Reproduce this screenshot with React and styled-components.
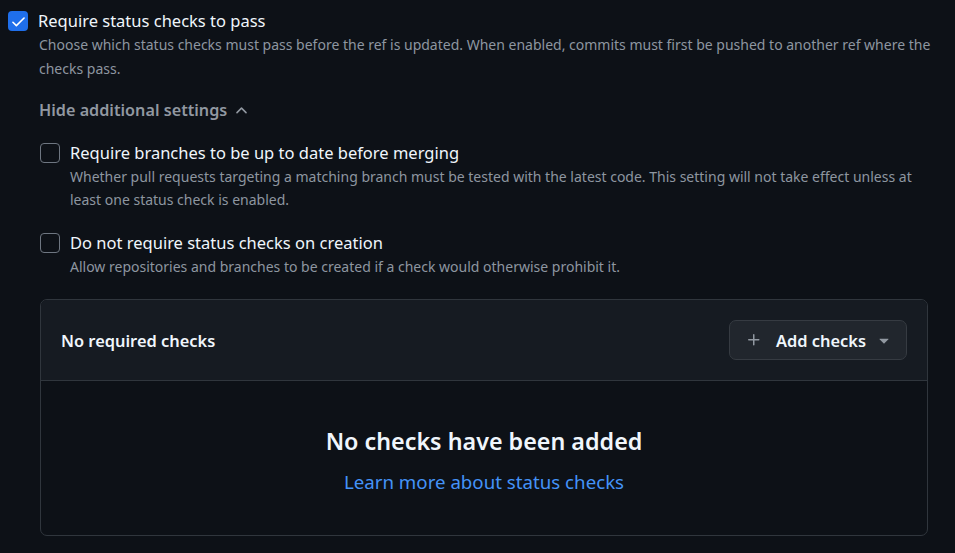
import React from "react";
import styled, { createGlobalStyle } from "styled-components";

const GlobalStyle = createGlobalStyle`
  html, body {
    margin: 0;
    padding: 0;
    background: #0d1117;
  }
  body {
    font-family: "Noto Sans", "Liberation Sans", sans-serif;
    color: #e6edf3;
  }
`;

const Page = styled.div`
  width: 955px;
  height: 553px;
  padding: 9px 0 0 8px;
  box-sizing: border-box;
  overflow: hidden;
`;

const Option = styled.div`
  display: flex;
  align-items: flex-start;
  gap: 10px;
  margin-top: ${(p) => p.$top || 0}px;
`;

const Box = styled.span`
  flex: none;
  width: 20px;
  height: 20px;
  margin-top: 2px;
  box-sizing: border-box;
  border-radius: 4px;
  display: flex;
  align-items: center;
  justify-content: center;
  background: ${(p) => (p.$checked ? "#1f6feb" : "transparent")};
  border: ${(p) => (p.$checked ? "none" : "1px solid #6e7681")};
`;

const OptionBody = styled.div`
  flex: 1;
  min-width: 0;
`;

const Title = styled.div`
  font-size: 16.5px;
  line-height: 24px;
  color: #f0f6fc;
`;

const Note = styled.div`
  font-size: 14px;
  line-height: ${(p) => p.$lh || 24}px;
  color: #8d96a0;
  padding-left: ${(p) => p.$indent || 0}px;
`;

const Toggle = styled.button`
  all: unset;
  display: flex;
  align-items: center;
  gap: 6px;
  margin: 17px 0 0 -1px;
  font-family: inherit;
  font-size: 16.2px;
  line-height: 24px;
  font-weight: 600;
  color: #9198a1;
  cursor: pointer;
`;

const Nested = styled.div`
  padding-left: 32px;
  width: 888px;
`;

const ChecksPanel = styled.div`
  margin-top: 20px;
  border: 1px solid #30363d;
  border-radius: 7px;
  overflow: hidden;
`;

const PanelHeader = styled.div`
  display: flex;
  align-items: center;
  justify-content: space-between;
  padding: 20px;
  background: #161b22;
  border-bottom: 1px solid #30363d;
`;

const HeaderTitle = styled.div`
  font-size: 16.4px;
  font-weight: 600;
  color: #f0f6fc;
`;

const AddButton = styled.button`
  display: flex;
  align-items: center;
  height: 40px;
  box-sizing: border-box;
  padding: 0 12px 0 16px;
  background: #21262d;
  border: 1px solid #363b42;
  border-radius: 7px;
  font-family: inherit;
  font-size: 16.4px;
  font-weight: 600;
  color: #f0f6fc;
  cursor: pointer;

  .plus {
    margin-right: 14px;
  }
  .caret {
    margin-left: 8px;
  }
`;

const PanelBody = styled.div`
  display: flex;
  flex-direction: column;
  align-items: center;
  padding: 45px 0 41px;
`;

const EmptyTitle = styled.div`
  font-size: 23.3px;
  line-height: 30px;
  font-weight: 600;
  color: #f0f6fc;
`;

const LearnLink = styled.a`
  margin-top: 14px;
  font-size: 18.7px;
  line-height: 24px;
  color: #4493f8;
  text-decoration: none;
`;

const Check = () => (
  <svg width="17" height="17" viewBox="0 0 16 16" fill="#ffffff">
    <path d="M13.78 4.22a.75.75 0 0 1 0 1.06l-7.25 7.25a.75.75 0 0 1-1.06 0L2.22 9.28a.75.75 0 0 1 1.06-1.06L6 10.94l6.72-6.72a.75.75 0 0 1 1.06 0Z" />
  </svg>
);

const ChevronUp = () => (
  <svg width="17" height="17" viewBox="0 0 16 16" fill="#9198a1">
    <path d="M3.22 10.53a.749.749 0 0 1 0-1.06l4.25-4.25a.749.749 0 0 1 1.06 0l4.25 4.25a.749.749 0 1 1-1.06 1.06L8 6.811 4.28 10.53a.749.749 0 0 1-1.06 0Z" />
  </svg>
);

const Plus = () => (
  <svg className="plus" width="16" height="16" viewBox="0 0 16 16" fill="#9198a1">
    <path d="M7.75 2a.75.75 0 0 1 .75.75V7h4.25a.75.75 0 0 1 0 1.5H8.5v4.25a.75.75 0 0 1-1.5 0V8.5H2.75a.75.75 0 0 1 0-1.5H7V2.75A.75.75 0 0 1 7.75 2Z" />
  </svg>
);

const Caret = () => (
  <svg className="caret" width="20" height="20" viewBox="0 0 16 16" fill="#9198a1">
    <path d="m4.427 7.427 3.396 3.396a.25.25 0 0 0 .354 0l3.396-3.396A.25.25 0 0 0 11.396 7H4.604a.25.25 0 0 0-.177.427Z" />
  </svg>
);

export default function App() {
  return (
    <Page>
      <GlobalStyle />
      <Option>
        <Box $checked>
          <Check />
        </Box>
        <OptionBody>
          <Title>Require status checks to pass</Title>
        </OptionBody>
      </Option>
      <Note $indent={31}>
        Choose which status checks must pass before the ref is updated. When
        enabled, commits must first be pushed to another ref where the checks
        pass.
      </Note>

      <Nested>
        <Toggle>
          Hide additional settings
          <ChevronUp />
        </Toggle>

        <Option $top={19}>
          <Box />
          <OptionBody>
            <Title>Require branches to be up to date before merging</Title>
            <Note $lh={23}>
              Whether pull requests targeting a matching branch must be tested
              with the latest code. This setting will not take effect unless at
              least one status check is enabled.
            </Note>
          </OptionBody>
        </Option>

        <Option $top={20}>
          <Box />
          <OptionBody>
            <Title>Do not require status checks on creation</Title>
            <Note>
              Allow repositories and branches to be created if a check would
              otherwise prohibit it.
            </Note>
          </OptionBody>
        </Option>

        <ChecksPanel>
          <PanelHeader>
            <HeaderTitle>No required checks</HeaderTitle>
            <AddButton>
              <Plus />
              Add checks
              <Caret />
            </AddButton>
          </PanelHeader>
          <PanelBody>
            <EmptyTitle>No checks have been added</EmptyTitle>
            <LearnLink href="#">Learn more about status checks</LearnLink>
          </PanelBody>
        </ChecksPanel>
      </Nested>
    </Page>
  );
}
